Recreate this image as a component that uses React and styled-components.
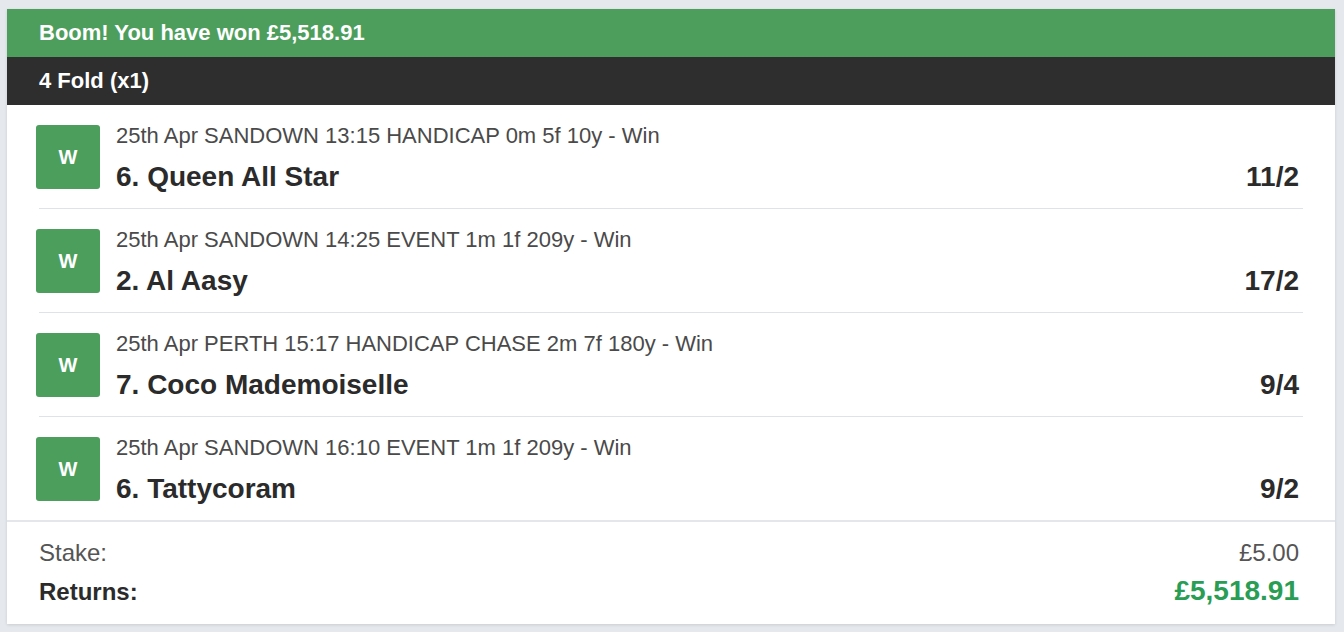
import styled, { createGlobalStyle } from "styled-components";

const GlobalStyle = createGlobalStyle`
  html, body {
    margin: 0;
    background: #e5e8ec;
    font-family: "Liberation Sans", Arial, Helvetica, sans-serif;
  }
`;

const Page = styled.div`
  padding: 9px 9px 9px 7px;
`;

const Card = styled.div`
  background: #fff;
  box-shadow: 0 1px 3px rgb(0 0 0 / 12%);
`;

const Banner = styled.div`
  height: 48px;
  display: flex;
  align-items: center;
  padding: 0 32px;
  background: ${(p) => p.bg};
  color: #fff;
  font-size: 22px;
  font-weight: bold;
`;

const Leg = styled.div`
  display: flex;
  align-items: flex-start;
  gap: 16px;
  margin: 0 32px;
  padding: 20px 0 17px;
  border-bottom: 1px solid #dfe3e7;

  &:last-child {
    border-bottom: none;
  }
`;

const Badge = styled.div`
  flex: none;
  width: 64px;
  height: 64px;
  margin-left: -3px;
  border-radius: 3px;
  background: #4b9e5b;
  color: #fff;
  font-size: 20px;
  font-weight: bold;
  display: flex;
  align-items: center;
  justify-content: center;
`;

const Info = styled.div`
  flex: 1;
`;

const Event = styled.div`
  font-size: 22px;
  line-height: 22px;
  color: #4a4a4a;
`;

const NameRow = styled.div`
  display: flex;
  justify-content: space-between;
  margin-top: 16px;
  padding-right: 4px;
  font-size: 28px;
  line-height: 28px;
  font-weight: bold;
  color: #2b2b2b;
`;

const Footer = styled.div`
  border-top: 2px solid #e3e6ea;
  padding: 17px 36px 16px 32px;
  display: grid;
  gap: 8px;
`;

const SumRow = styled.div`
  display: flex;
  justify-content: space-between;
  align-items: baseline;
  line-height: ${(p) => (p.strong ? "32px" : "28px")};
  font-size: 24px;
  color: ${(p) => (p.strong ? "#2b2b2b" : "#555")};
  font-weight: ${(p) => (p.strong ? "bold" : "normal")};
`;

const Amount = styled.span`
  font-size: ${(p) => (p.big ? "28px" : "24px")};
  color: ${(p) => (p.big ? "#2a9d55" : "#555")};
`;

const legs = [
  { event: "25th Apr SANDOWN 13:15 HANDICAP 0m 5f 10y - Win", name: "6. Queen All Star", odds: "11/2" },
  { event: "25th Apr SANDOWN 14:25 EVENT 1m 1f 209y - Win", name: "2. Al Aasy", odds: "17/2" },
  { event: "25th Apr PERTH 15:17 HANDICAP CHASE 2m 7f 180y - Win", name: "7. Coco Mademoiselle", odds: "9/4" },
  { event: "25th Apr SANDOWN 16:10 EVENT 1m 1f 209y - Win", name: "6. Tattycoram", odds: "9/2" },
];

const App = () => {
  return (
    <Page>
      <GlobalStyle />
      <Card>
        <Banner bg="#4d9e5c">Boom! You have won £5,518.91</Banner>
        <Banner bg="#2e2e2e">4 Fold (x1)</Banner>
        <div>
          {legs.map((leg) => (
            <Leg key={leg.name}>
              <Badge>W</Badge>
              <Info>
                <Event>{leg.event}</Event>
                <NameRow>
                  <span>{leg.name}</span>
                  <span>{leg.odds}</span>
                </NameRow>
              </Info>
            </Leg>
          ))}
        </div>
        <Footer>
          <SumRow>
            <span>Stake:</span>
            <Amount>£5.00</Amount>
          </SumRow>
          <SumRow strong>
            <span>Returns:</span>
            <Amount big>£5,518.91</Amount>
          </SumRow>
        </Footer>
      </Card>
    </Page>
  );
};

export default App;
